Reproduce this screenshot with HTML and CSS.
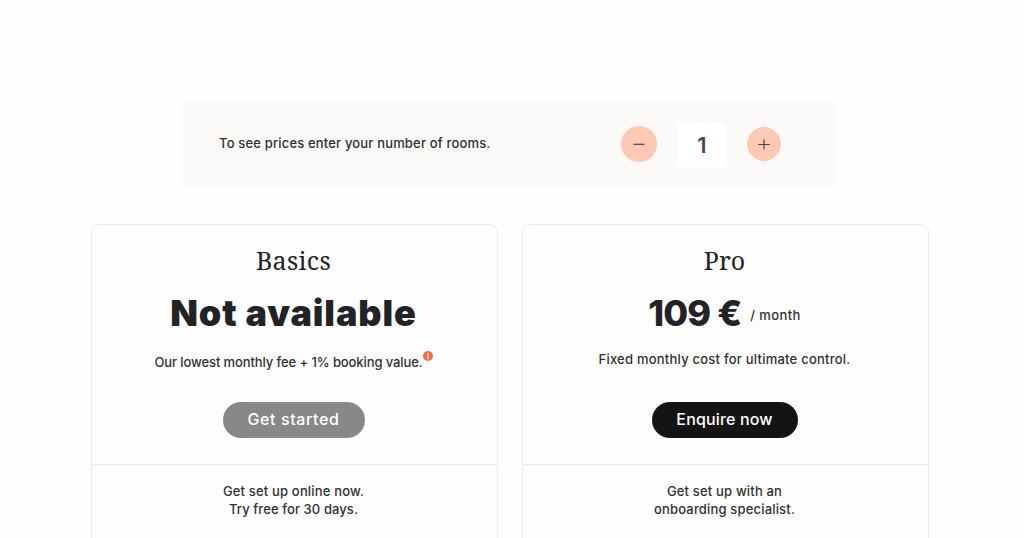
FILE: index.html
```html
<!DOCTYPE html>
<html lang="en">
<head>
    <meta charset="UTF-8">
    <title>Pricing</title>
    <link rel="stylesheet" href="styles.css">
</head>
<body>
    <div class="rooms">
        <label class="rooms-label" for="rooms">To see prices enter your number of rooms.</label>
        <div class="stepper">
            <button class="step step-minus" type="button" aria-label="Fewer rooms">
                <svg width="14" height="14" viewBox="0 0 14 14"><path d="M1.5 7.3h11"/></svg>
            </button>
            <output class="count" id="rooms">1</output>
            <button class="step step-plus" type="button" aria-label="More rooms">
                <svg width="14" height="14" viewBox="0 0 14 14"><path d="M1.2 7.5h11.6M7 2.5v10"/></svg>
            </button>
        </div>
    </div>

    <div class="plans">
        <section class="plan plan-basics">
            <div class="plan-head">
                <h2>Basics</h2>
                <p class="price">Not available</p>
                <p class="note">Our lowest monthly fee + 1% booking value.<svg class="info" width="10" height="10" viewBox="0 0 10 10"><circle cx="5" cy="5" r="5" fill="#f9693f"/><path d="M5 1.8v6.4" stroke="#ffd9ca" stroke-width="1.6"/></svg></p>
                <a class="btn btn-disabled">Get started</a>
            </div>
            <p class="setup">Get set up online now.<br><span class="trial">Try free for 30 days.</span></p>
        </section>

        <section class="plan plan-pro">
            <div class="plan-head">
                <h2>Pro</h2>
                <p class="price">109 €<span class="period">/ month</span></p>
                <p class="note">Fixed monthly cost for ultimate control.</p>
                <a class="btn">Enquire now</a>
            </div>
            <p class="setup">Get set up with an<br>onboarding specialist.</p>
        </section>
    </div>
</body>
</html>
```
FILE: styles.css
```css
* {
    box-sizing: border-box;
}

body {
    margin: 0;
    height: 538px;
    overflow: hidden;
    background: #fefefe;
    color: #303033;
    font-family: Inter, "Liberation Sans", sans-serif;
    font-weight: 500;
}

h2, p {
    margin: 0;
}

.rooms {
    display: flex;
    justify-content: space-between;
    align-items: center;
    width: 656px;
    height: 85px;
    margin: 102px 0 0 181px;
    padding: 0 56px 1px 38px;
    background: #fcfaf9;
    border-radius: 4px;
}

.rooms-label {
    padding-bottom: 2px;
    font-size: 13px;
    letter-spacing: 0.17px;
    line-height: 18px;
}

.stepper {
    display: flex;
    align-items: center;
}

.step {
    display: flex;
    align-items: center;
    justify-content: center;
    width: 34px;
    height: 34px;
    padding: 0;
    border: none;
    border-radius: 50%;
    background: #ffc9b6;
}

.step-minus {
    width: 36px;
    height: 36px;
}

.step path {
    fill: none;
    stroke: #55423d;
    stroke-width: 1.2;
}

.count {
    width: 48px;
    height: 45px;
    margin: 0 21px;
    background: #fff;
    border-radius: 4px;
    color: #4a4a4c;
    font-size: 22px;
    font-weight: 600;
    line-height: 47px;
    text-align: center;
}

.plans {
    display: flex;
    gap: 24px;
    margin: 37px 0 0 91px;
}

.plan {
    width: 407px;
    height: 340px;
    border: 1px solid #ebebeb;
    border-radius: 8px;
    text-align: center;
}

.plan-head {
    display: flex;
    flex-direction: column;
    align-items: center;
    height: 240px;
    padding: 19px 2px 0 0;
    border-bottom: 1px solid #ebebeb;
}

h2 {
    color: #222326;
    font-family: "Noto Serif", "Liberation Serif", serif;
    font-size: 25px;
    font-weight: 400;
    line-height: 32px;
}

.price {
    display: flex;
    align-items: center;
    height: 44px;
    margin-top: 15px;
    color: #222326;
    font-size: 36px;
    font-weight: 800;
}

.period {
    margin-left: 9px;
    padding-top: 4px;
    color: #303033;
    font-size: 13px;
    font-weight: 500;
}

.note {
    display: flex;
    height: 18px;
    margin-top: 15px;
    font-size: 13px;
    line-height: 18px;
}

.btn {
    width: 146px;
    height: 36px;
    margin-top: 34px;
    border-radius: 18px;
    background: #141414;
    color: #fff;
    font-size: 16px;
    line-height: 35px;
}

.btn-disabled {
    width: 142px;
    background: #888;
}

.setup {
    padding: 17px 2px 0 0;
    font-size: 13px;
    letter-spacing: 0.17px;
    line-height: 18px;
}

/* Basics */
.plan-basics h2 {
    letter-spacing: 0.3px;
}

.plan-basics .price {
    font-weight: 900;
    letter-spacing: 0.9px;
}

.plan-basics .note {
    margin-top: 18px;
    margin-bottom: -3px;
    letter-spacing: -0.1px;
}

.plan-basics .btn {
    letter-spacing: 0.6px;
}

.info {
    margin-top: -2px;
}

.trial {
    letter-spacing: 0.1px;
}

/* Pro */
.plan-pro .price {
    letter-spacing: -0.9px;
}

.plan-pro .period {
    letter-spacing: 0.4px;
}

.plan-pro .note {
    letter-spacing: 0.23px;
}

.plan-pro .btn {
    letter-spacing: 0.15px;
}
```
